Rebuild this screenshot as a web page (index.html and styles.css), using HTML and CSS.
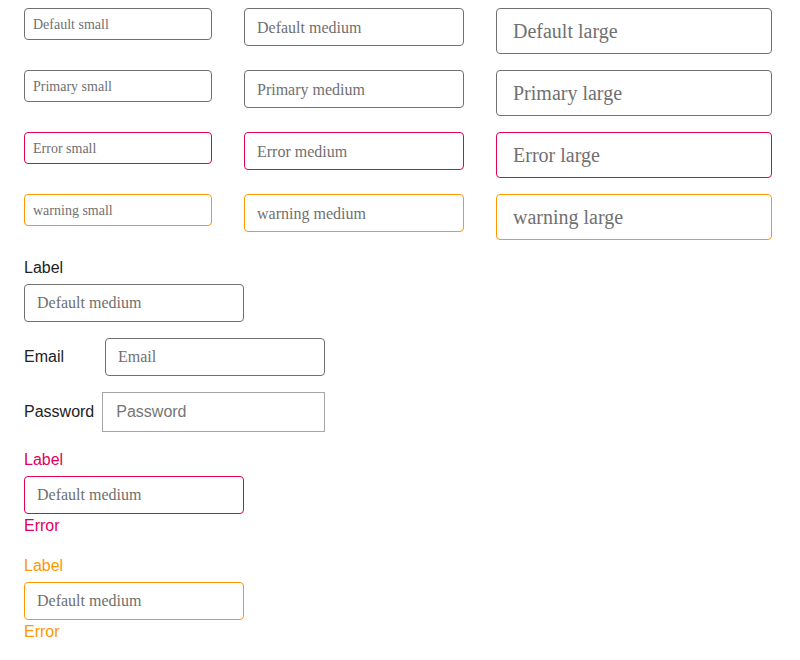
FILE: index.html
```html
<!DOCTYPE html>
<html>
<head>
<meta charset="utf-8">
<link rel="stylesheet" href="styles.css">
</head>
<body>
<div class="page">
  <div class="grid">
    <input class="field sm" placeholder="Default small">
    <input class="field md" placeholder="Default medium">
    <input class="field lg" placeholder="Default large">
    <input class="field sm" placeholder="Primary small">
    <input class="field md" placeholder="Primary medium">
    <input class="field lg" placeholder="Primary large">
    <input class="field sm error" placeholder="Error small">
    <input class="field md error" placeholder="Error medium">
    <input class="field lg error" placeholder="Error large">
    <input class="field sm warning" placeholder="warning small">
    <input class="field md warning" placeholder="warning medium">
    <input class="field lg warning" placeholder="warning large">
  </div>

  <div class="group first">
    <label class="label">Label</label>
    <input class="field md wide" placeholder="Default medium">
  </div>

  <div class="row email-row">
    <label class="inline-label email-label">Email</label>
    <input class="field md wide" placeholder="Email">
  </div>

  <div class="row pass-row">
    <label class="inline-label">Password</label>
    <input class="native" type="password" placeholder="Password">
  </div>

  <div class="group err-group is-error">
    <label class="label">Label</label>
    <input class="field md wide error" placeholder="Default medium">
    <div class="msg">Error</div>
  </div>

  <div class="group warn-group is-warning">
    <label class="label">Label</label>
    <input class="field md wide warning" placeholder="Default medium">
    <div class="msg">Error</div>
  </div>
</div>
</body>
</html>
```

FILE: styles.css
```css
html, body {
  margin: 0;
  padding: 0;
  background: #ffffff;
}

body {
  font-family: "Liberation Sans", Arial, sans-serif;
  color: #222222;
}

.page {
  padding: 8px 16px 0 24px;
}

.grid {
  display: grid;
  grid-template-columns: 188px 220px 276px;
  column-gap: 32px;
  row-gap: 16px;
  align-items: start;
}

.field {
  display: block;
  box-sizing: border-box;
  margin: 0;
  border: 1px solid #707070;
  border-radius: 4px;
  background: #ffffff;
  font-family: "Liberation Serif", "Times New Roman", serif;
  color: #333333;
  outline: none;
}

.field::placeholder {
  color: #707070;
  opacity: 1;
}

.field.sm {
  height: 32px;
  padding: 0 8px;
  font-size: 14px;
}

.field.md {
  height: 38px;
  padding: 0 12px;
  font-size: 16px;
}

.field.lg {
  height: 46px;
  padding: 0 16px;
  font-size: 20px;
}

.grid .field.sm,
.grid .field.md {
  padding-top: 2px;
}

.field.error {
  border-color: #e2005a;
}

.field.warning {
  border-color: #ff9800;
}

.field.wide {
  width: 220px;
}

.label {
  display: block;
  font-size: 16px;
  line-height: 20px;
  margin-bottom: 6px;
}

.group.first {
  margin-top: 18px;
}

.row {
  display: flex;
  align-items: baseline;
  margin-top: 16px;
  font-size: 16px;
}

.inline-label {
  line-height: 20px;
  margin-right: 8px;
}

.email-label {
  width: 73px;
}

.native {
  box-sizing: border-box;
  width: 223px;
  height: 40px;
  margin: 0;
  padding: 0 13px;
  border: 1px solid #a6a6a6;
  border-radius: 0;
  font-family: "Liberation Sans", Arial, sans-serif;
  font-size: 16px;
  outline: none;
}

.native::placeholder {
  color: #757575;
  opacity: 1;
}

.err-group {
  margin-top: 18px;
}

.warn-group {
  margin-top: 20px;
}

.msg {
  font-size: 16px;
  line-height: 20px;
  margin-top: 2px;
}

.is-error .label,
.is-error .msg {
  color: #e2005a;
}

.is-warning .label,
.is-warning .msg {
  color: #ff9800;
}
```
